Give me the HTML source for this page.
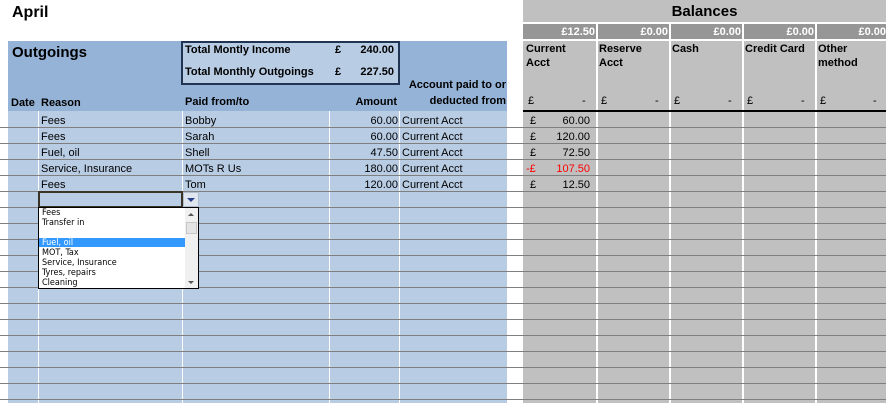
<!DOCTYPE html>
<html><head><style>
body{margin:0;width:886px;height:403px;background:#fff;position:relative;overflow:hidden;font-family:"Liberation Sans",Arial,sans-serif;font-size:11px;color:#000}
div{position:absolute;box-sizing:border-box}
.t{white-space:nowrap;line-height:14px}
.b{font-weight:bold}
.r{text-align:right}
</style></head><body>
<div class="t b" style="left:12px;top:4px;font-size:16px;line-height:18px">April</div>

<div style="left:8px;top:41px;width:499px;height:70px;background:#95b3d7"></div>
<div style="left:8px;top:111px;width:499px;height:292px;background:#b8cce4"></div>
<div class="t b" style="left:12px;top:45px;font-size:15px;line-height:16px">Outgoings</div>
<div style="left:181px;top:41px;width:219px;height:44px;border:2px solid #1f3553;background:#b8cce4"></div>
<div class="t b" style="left:185px;top:43px">Total Montly Income</div>
<div class="t b" style="left:185px;top:65px">Total Monthly Outgoings</div>
<div class="t b" style="left:335px;top:43px">£</div>
<div class="t b" style="left:335px;top:65px">£</div>
<div class="t b r" style="left:340px;top:43px;width:54px">240.00</div>
<div class="t b r" style="left:340px;top:65px;width:54px">227.50</div>
<div class="t b r" style="left:400px;top:78px;width:106px">Account paid to or</div>
<div class="t b r" style="left:400px;top:94px;width:106px">deducted from</div>
<div class="t b" style="left:11px;top:96px">Date</div>
<div class="t b" style="left:41px;top:96px">Reason</div>
<div class="t b" style="left:185px;top:95px">Paid from/to</div>
<div class="t b r" style="left:330px;top:95px;width:67px">Amount</div>

<div style="left:38px;top:111px;width:1px;height:292px;background:#fff"></div>
<div style="left:182px;top:111px;width:1px;height:292px;background:#fff"></div>
<div style="left:329px;top:111px;width:1px;height:292px;background:#fff"></div>
<div style="left:399px;top:111px;width:1px;height:292px;background:#fff"></div>

<div style="left:523px;top:0;width:363px;height:403px;background:#c0c0c0"></div>
<div class="t b" style="left:523px;top:3px;width:363px;text-align:center;font-size:15px;line-height:17px">Balances</div>
<div style="left:523px;top:22px;width:363px;height:2px;background:#fff"></div>
<div style="left:523px;top:24px;width:363px;height:15px;background:#969696"></div>
<div style="left:523px;top:39px;width:363px;height:2px;background:#fff"></div>
<div style="left:596px;top:22px;width:2px;height:381px;background:#fff"></div>
<div style="left:669px;top:22px;width:2px;height:381px;background:#fff"></div>
<div style="left:742px;top:22px;width:2px;height:381px;background:#fff"></div>
<div style="left:815px;top:22px;width:2px;height:381px;background:#fff"></div>
<div class="t b r" style="left:523px;top:25px;width:72px;color:#fff">£12.50</div>
<div class="t b r" style="left:598px;top:25px;width:70px;color:#fff">£0.00</div>
<div class="t b r" style="left:671px;top:25px;width:70px;color:#fff">£0.00</div>
<div class="t b r" style="left:744px;top:25px;width:70px;color:#fff">£0.00</div>
<div class="t b r" style="left:817px;top:25px;width:69px;color:#fff">£0.00</div>
<div class="t b" style="left:526px;top:42px">Current<br>Acct</div>
<div class="t b" style="left:599px;top:42px">Reserve<br>Acct</div>
<div class="t b" style="left:672px;top:42px">Cash</div>
<div class="t b" style="left:745px;top:42px">Credit Card</div>
<div class="t b" style="left:818px;top:42px">Other<br>method</div>
<div class="t" style="left:528px;top:94px">£</div><div class="t" style="left:582px;top:94px">-</div>
<div class="t" style="left:601px;top:94px">£</div><div class="t" style="left:655px;top:94px">-</div>
<div class="t" style="left:674px;top:94px">£</div><div class="t" style="left:728px;top:94px">-</div>
<div class="t" style="left:747px;top:94px">£</div><div class="t" style="left:801px;top:94px">-</div>
<div class="t" style="left:820px;top:94px">£</div><div class="t" style="left:873px;top:94px">-</div>
<div style="left:523px;top:110px;width:363px;height:2px;background:#000"></div>

<div style="left:0;top:127px;width:886px;height:272px;background:repeating-linear-gradient(to bottom,#7f7f7f 0,#7f7f7f 1px,transparent 1px,transparent 16px)"></div>
<div style="left:0;top:399px;width:886px;height:1px;background:#7f7f7f"></div>

<div class="t" style="left:41px;top:114px">Fees</div>
<div class="t" style="left:41px;top:130px">Fees</div>
<div class="t" style="left:41px;top:146px">Fuel, oil</div>
<div class="t" style="left:41px;top:162px">Service, Insurance</div>
<div class="t" style="left:41px;top:178px">Fees</div>
<div class="t" style="left:185px;top:114px">Bobby</div>
<div class="t" style="left:185px;top:130px">Sarah</div>
<div class="t" style="left:185px;top:146px">Shell</div>
<div class="t" style="left:185px;top:162px">MOTs R Us</div>
<div class="t" style="left:185px;top:178px">Tom</div>
<div class="t r" style="left:330px;top:114px;width:68px">60.00</div>
<div class="t r" style="left:330px;top:130px;width:68px">60.00</div>
<div class="t r" style="left:330px;top:146px;width:68px">47.50</div>
<div class="t r" style="left:330px;top:162px;width:68px">180.00</div>
<div class="t r" style="left:330px;top:178px;width:68px">120.00</div>
<div class="t" style="left:402px;top:114px">Current Acct</div>
<div class="t" style="left:402px;top:130px">Current Acct</div>
<div class="t" style="left:402px;top:146px">Current Acct</div>
<div class="t" style="left:402px;top:162px">Current Acct</div>
<div class="t" style="left:402px;top:178px">Current Acct</div>
<div class="t" style="left:530px;top:114px">£</div><div class="t r" style="left:540px;top:114px;width:50px">60.00</div>
<div class="t" style="left:530px;top:130px">£</div><div class="t r" style="left:540px;top:130px;width:50px">120.00</div>
<div class="t" style="left:530px;top:146px">£</div><div class="t r" style="left:540px;top:146px;width:50px">72.50</div>
<div class="t" style="left:526px;top:162px;color:#f00">-£</div><div class="t r" style="left:540px;top:162px;width:50px;color:#f00">107.50</div>
<div class="t" style="left:530px;top:178px">£</div><div class="t r" style="left:540px;top:178px;width:50px">12.50</div>

<div style="left:38px;top:191px;width:145px;height:17px;border:2px solid #3b3326;background:#b8cce4"></div>
<div style="left:183px;top:192px;width:16px;height:15px;background:#dfe6f0;border:1px solid #b0bccc"></div>
<div style="left:187px;top:198px;width:0;height:0;border-left:4px solid transparent;border-right:4px solid transparent;border-top:4px solid #2c3f8a"></div>
<div style="left:38px;top:207px;width:161px;height:82px;border:1px solid #000;background:#fff"></div>
<div style="left:39px;top:238px;width:146px;height:9px;background:#3399ff"></div>
<div style="left:185px;top:208px;width:13px;height:80px;background:#f0f0f0"></div>
<div style="left:186px;top:222px;width:11px;height:12px;background:#e4e4e4;border:1px solid #c8c8c8"></div>
<div style="left:188px;top:213px;width:0;height:0;border-left:3px solid transparent;border-right:3px solid transparent;border-bottom:3px solid #555"></div>
<div style="left:188px;top:281px;width:0;height:0;border-left:3px solid transparent;border-right:3px solid transparent;border-top:3px solid #555"></div>
<div style="left:42px;top:208px;font-size:9px;line-height:10px;white-space:nowrap;font-family:'DejaVu Sans Condensed','Liberation Sans',sans-serif">Fees<br>Transfer in<br>&nbsp;<br><span style="color:#fff">Fuel, oil</span><br>MOT, Tax<br>Service, Insurance<br>Tyres, repairs<br>Cleaning</div>
</body></html>
